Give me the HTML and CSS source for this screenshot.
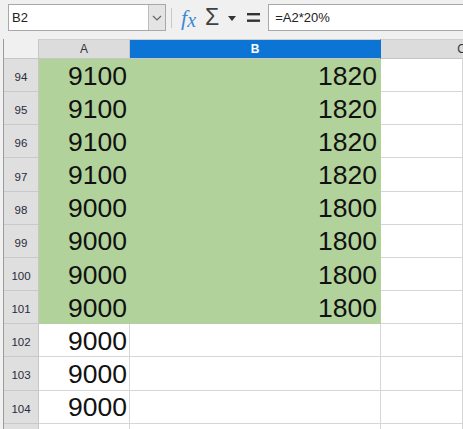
FILE: index.html
```html
<!DOCTYPE html>
<html>
<head>
<meta charset="utf-8">
<link rel="stylesheet" href="styles.css">
</head>
<body>
<div class="toolbar">
  <div class="namebox">
    <span class="name-text">B2</span>
    <span class="name-drop"><svg width="10" height="6" viewBox="0 0 10 6"><path d="M1 1 L5 5 L9 1" fill="none" stroke="#666" stroke-width="1.2"/></svg></span>
  </div>
  <span class="sep"></span>
  <span class="fx">f<span class="fx-x">x</span></span>
  <span class="sigma">&Sigma;</span>
  <svg class="tri" width="8" height="5" viewBox="0 0 8 5"><path d="M0 0 H8 L4 5 Z" fill="#333"/></svg>
  <svg class="eq" width="13" height="10" viewBox="0 0 13 10"><rect x="0" y="0" width="13" height="2.4" fill="#333"/><rect x="0" y="6.5" width="13" height="2.4" fill="#333"/></svg>
  <div class="formula">=A2*20%</div>
</div>
<div class="sheet">
  <div class="corner"></div>
  <div class="colhead">A</div>
  <div class="colhead sel">B</div>
  <div class="colhead last">C</div>

  <div class="rowhead">94</div><div class="cell a fill">9100</div><div class="cell b fill">1820</div><div class="cell c"></div>
  <div class="rowhead">95</div><div class="cell a fill">9100</div><div class="cell b fill">1820</div><div class="cell c"></div>
  <div class="rowhead">96</div><div class="cell a fill">9100</div><div class="cell b fill">1820</div><div class="cell c"></div>
  <div class="rowhead">97</div><div class="cell a fill">9100</div><div class="cell b fill">1820</div><div class="cell c"></div>
  <div class="rowhead">98</div><div class="cell a fill">9000</div><div class="cell b fill">1800</div><div class="cell c"></div>
  <div class="rowhead">99</div><div class="cell a fill">9000</div><div class="cell b fill">1800</div><div class="cell c"></div>
  <div class="rowhead">100</div><div class="cell a fill">9000</div><div class="cell b fill">1800</div><div class="cell c"></div>
  <div class="rowhead">101</div><div class="cell a fill">9000</div><div class="cell b fill">1800</div><div class="cell c"></div>
  <div class="rowhead">102</div><div class="cell a">9000</div><div class="cell b"></div><div class="cell c"></div>
  <div class="rowhead">103</div><div class="cell a">9000</div><div class="cell b"></div><div class="cell c"></div>
  <div class="rowhead">104</div><div class="cell a">9000</div><div class="cell b"></div><div class="cell c"></div>
  <div class="rowhead stub"></div><div class="cell a stub"></div><div class="cell b stub"></div><div class="cell c stub"></div>
</div>
</body>
</html>
```
FILE: styles.css
```css
html, body {
  margin: 0;
  padding: 0;
}
body {
  width: 463px;
  height: 429px;
  overflow: hidden;
  background: #f0f0f0;
  font-family: "Liberation Sans", Arial, sans-serif;
}
.toolbar {
  height: 39px;
  display: flex;
  align-items: center;
  padding-left: 8px;
  box-sizing: border-box;
  padding-bottom: 4px;
}
.namebox {
  width: 158px;
  height: 27px;
  box-sizing: border-box;
  border: 1px solid #a8a8a8;
  background: #fff;
  display: flex;
  align-items: stretch;
}
.name-text {
  flex: 1;
  font-size: 13px;
  color: #222;
  padding-left: 3px;
  display: flex;
  align-items: center;
}
.name-drop {
  width: 16px;
  background: #e4e4e4;
  border-left: 1px solid #bdbdbd;
  display: flex;
  align-items: center;
  justify-content: center;
}
.sep {
  width: 1px;
  height: 20px;
  background: #c8c8c8;
  margin-left: 5px;
}
.fx {
  font-family: "Liberation Serif", serif;
  font-style: italic;
  color: #3b8ad6;
  font-size: 22px;
  margin-left: 9px;
  line-height: 1;
}
.fx-x {
  font-size: 20px;
  position: relative;
  top: 2px;
}
.sigma {
  font-family: "Liberation Sans", sans-serif;
  font-size: 23px;
  color: #404040;
  margin-left: 9px;
  line-height: 1;
}
.tri {
  margin-left: 9px;
  margin-top: 2px;
}
.eq {
  margin-left: 11px;
}
.formula {
  margin-left: 8px;
  flex: 1;
  height: 27px;
  box-sizing: border-box;
  border: 1px solid #a8a8a8;
  border-right: none;
  background: #fff;
  font-size: 13px;
  color: #222;
  padding-left: 6px;
  display: flex;
  align-items: center;
}
.sheet {
  margin-left: 3px;
  border-left: 1px solid #9c9c9c;
  display: grid;
  grid-template-columns: 35px 91px 251px 82px;
  grid-template-rows: 20px repeat(11, 33.17px) 5px;
  background: #fff;
}
.corner {
  background: #f0f0f0;
  border-right: 1px solid #c6c6c6;
  border-bottom: 1px solid #c6c6c6;
}
.colhead {
  background: #dcdcdc;
  border-right: 1px solid #c6c6c6;
  border-bottom: 1px solid #c6c6c6;
  border-top: 1px solid #cfcfcf;
  font-size: 12px;
  color: #333;
  display: flex;
  align-items: center;
  justify-content: center;
  box-sizing: border-box;
}
.colhead.sel {
  background: #0b74d5;
  color: #fff;
  font-weight: bold;
  border-right-color: #0b74d5;
}
.colhead.last {
  justify-content: flex-end;
  margin-right: -4px;
}
.rowhead {
  background: #dfdfdf;
  border-right: 1px solid #c6c6c6;
  border-bottom: 1px solid #c9c9c9;
  font-size: 11.5px;
  color: #2a2a3a;
  display: flex;
  align-items: center;
  justify-content: center;
  padding-top: 4px;
  box-sizing: border-box;
}
.cell {
  box-sizing: border-box;
  border-right: 1px solid #d6d6d6;
  border-bottom: 1px solid #d6d6d6;
  font-size: 26.5px;
  color: #111;
  display: flex;
  align-items: flex-end;
  justify-content: flex-end;
  padding-right: 2px;
  line-height: 1.15;
}
.cell.fill {
  background: #b1d39b;
  border-color: #b1d39b;
}
.cell.b {
  padding-right: 3px;
}
.stub {
  border-bottom: none;
  padding: 0;
}
```
